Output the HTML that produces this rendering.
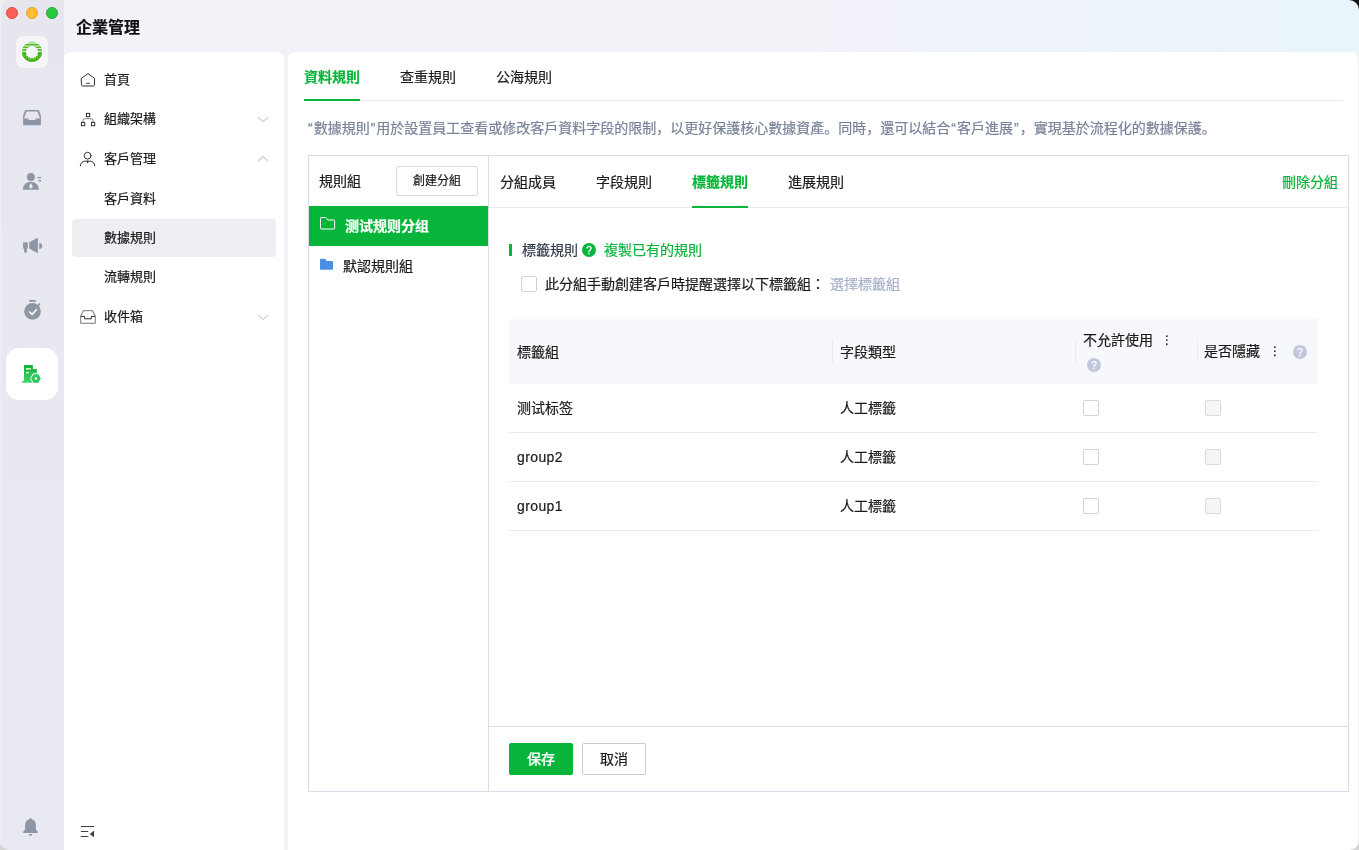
<!DOCTYPE html>
<html lang="zh-Hans">
<head>
<meta charset="utf-8">
<title>企業管理</title>
<style>
*{box-sizing:border-box;margin:0;padding:0}
html,body{width:1359px;height:850px;overflow:hidden;background:#d4d4d4}
body{font-family:"Liberation Sans","Noto Sans CJK SC","Noto Sans CJK TC",sans-serif;font-size:14px;color:#1a1a1a;position:relative}
.win{will-change:transform;position:absolute;left:0;top:0;width:1359px;height:850px;border-radius:10px;overflow:hidden;background:linear-gradient(90deg,#f2f2f9 0%,#f2f2f9 60%,#eaf4fb 97%)}
.abs{position:absolute}
.win{-webkit-text-stroke:.2px currentColor}
.t{position:absolute;white-space:nowrap;line-height:20px;height:20px}
.rail{position:absolute;left:0;top:0;width:64px;height:850px;background:linear-gradient(180deg,#e7e6ee 0,#e8e8f1 300px,#e8e9f3 100%);box-shadow:inset 1px 0 0 #eeeef4}
.dot{position:absolute;top:7px;width:12px;height:12px;border-radius:50%}
.nav{font-size:13px;position:absolute;left:64px;top:52px;width:220px;height:800px;background:#fff;border-radius:8px 8px 0 0}
.main{position:absolute;left:288px;top:52px;width:1070px;height:800px;background:#fff;border-radius:8px 8px 0 0}
.g{color:#07b53b}
.b{font-weight:700}
.ln{position:absolute;background:#e9ebf1}
.cb{position:absolute;width:16px;height:16px;border:1px solid #d2d2d2;border-radius:2px;background:#fff}
.cb.d{background:#f5f5f5;border-color:#dadada}
.q{position:absolute;width:14px;height:14px;border-radius:50%;background:#c1c8dc;color:#fff;font-size:10px;font-weight:400;-webkit-text-stroke:.3px #fff;line-height:15px;text-align:center;font-family:"Liberation Sans",sans-serif}
</style>
</head>
<body>
<div class="abs" style="right:0;top:0;width:14px;height:14px;background:#161616"></div>
<div class="abs" style="left:0;top:0;width:14px;height:14px;background:#efefef"></div>
<div class="win">
  <!-- title -->
  <div class="t b" style="left:76px;top:18px;font-size:16px;color:#111">企業管理</div>

  <!-- left rail -->
  <div class="rail">
    <div class="dot" style="left:6px;background:#fe5f57;border:0.5px solid #e2463f"></div>
    <div class="dot" style="left:26px;background:#febc2e;border:0.5px solid #e0a028"></div>
    <div class="dot" style="left:46px;background:#28c840;border:0.5px solid #1fa833"></div>
    <div class="abs" style="left:16px;top:36px;width:32px;height:32px;border-radius:8px;background:#f5f5f8"></div>
    <div class="abs" style="left:6px;top:348px;width:52px;height:52px;border-radius:13px;background:#fff"></div>
  </div>

  <!-- nav -->
  <div class="nav">
    <div class="abs" style="left:8px;top:167px;width:204px;height:38px;border-radius:4px;background:#ededf2"></div>
    <div class="t" style="left:40px;top:18px">首頁</div>
    <div class="t" style="left:40px;top:57px">組織架構</div>
    <div class="t" style="left:40px;top:97px">客戶管理</div>
    <div class="t" style="left:40px;top:137px">客戶資料</div>
    <div class="t" style="left:40px;top:176px">數據規則</div>
    <div class="t" style="left:40px;top:215px">流轉規則</div>
    <div class="t" style="left:40px;top:255px">收件箱</div>
  </div>

  <!-- main -->
  <div class="main">
    <div class="t g b" style="left:16px;top:15px">資料規則</div>
    <div class="t" style="left:112px;top:15px">查重規則</div>
    <div class="t" style="left:208px;top:15px">公海規則</div>
    <div class="ln" style="left:16px;top:48px;width:1039px;height:1px"></div>
    <div class="abs" style="left:16px;top:47px;width:56px;height:2px;background:#07b53b"></div>
    <div class="t" style="left:20px;top:66px;color:#78839a"><span style="padding:0 1px 0 0">“</span>數據規則<span style="padding:0 1px">”</span>用於設置員工查看或修改客戶資料字段的限制，以更好保護核心數據資產。同時，還可以結合<span style="padding:0 1px">“</span>客戶進展<span style="padding:0 1px">”</span>，實現基於流程化的數據保護。</div>

    <!-- panel -->
    <div class="abs" style="left:20px;top:103px;width:1041px;height:637px;border:1px solid #d9dde8">
      <div class="ln" style="left:179px;top:0;width:1px;height:635px;background:#d9dde8"></div>
      <div class="t" style="left:10px;top:15px">規則組</div>
      <div class="abs" style="left:87px;top:10px;width:82px;height:30px;border:1px solid #dcdcdc;border-radius:2px;font-size:12px;line-height:28px;text-align:center">創建分組</div>
      <div class="abs" style="left:0;top:50px;width:179px;height:40px;background:#07b53b"></div>
      <div class="t b" style="left:36px;top:60px;color:#fff">测试规则分组</div>
      <div class="t" style="left:34px;top:100px">默認規則組</div>

      <!-- right tabs -->
      <div class="t" style="left:191px;top:16px">分組成員</div>
      <div class="t" style="left:287px;top:16px">字段規則</div>
      <div class="t g b" style="left:383px;top:16px">標籤規則</div>
      <div class="t" style="left:479px;top:16px">進展規則</div>
      <div class="t g" style="right:10px;top:16px">刪除分組</div>
      <div class="ln" style="left:180px;top:51px;width:859px;height:1px"></div>
      <div class="abs" style="left:383px;top:50px;width:56px;height:2px;background:#07b53b"></div>

      <!-- section -->
      <div class="abs" style="left:200px;top:88px;width:3px;height:12px;background:#07b53b"></div>
      <div class="t" style="left:213px;top:84px;color:#30384a">標籤規則</div>
      <div class="q" style="left:273px;top:87px;background:#07b53b">?</div>
      <div class="t g" style="left:295px;top:84px">複製已有的規則</div>
      <div class="cb" style="left:212px;top:120px"></div>
      <div class="t" style="left:236px;top:118px">此分組手動創建客戶時提醒選擇以下標籤組<span lang="zh-Hant">：</span></div>
      <div class="t" style="left:521px;top:118px;color:#a6b0c8">選擇標籤組</div>

      <!-- table -->
      <div class="abs" style="left:200px;top:163px;width:809px;height:65px;background:#f7f8fc"></div>
      <div class="t" style="left:208px;top:186px">標籤組</div>
      <div class="t" style="left:531px;top:186px">字段類型</div>
      <div class="t" style="left:774px;top:174px">不允許使用</div>
      <div class="t" style="left:895px;top:185px">是否隱藏</div>
      <div class="t" style="left:852px;top:174px;font-family:'DejaVu Sans',sans-serif;font-size:12px;width:8px;text-align:center">⋮</div>
      <div class="t" style="left:960px;top:185px;font-family:'DejaVu Sans',sans-serif;font-size:12px;width:8px;text-align:center">⋮</div>
      <div class="q" style="left:778px;top:202px">?</div>
      <div class="q" style="left:984px;top:189px">?</div>
      <div class="ln" style="left:523px;top:184px;width:1px;height:23px;background:#e9ebf1"></div>
      <div class="ln" style="left:766px;top:184px;width:1px;height:23px;background:#e9ebf1"></div>
      <div class="ln" style="left:888px;top:184px;width:1px;height:23px;background:#e9ebf1"></div>

      <div class="t" style="left:208px;top:242px">测试标签</div>
      <div class="t" style="left:208px;top:291px;letter-spacing:.4px">group2</div>
      <div class="t" style="left:208px;top:340px;letter-spacing:.4px">group1</div>
      <div class="t" style="left:531px;top:242px">人工標籤</div>
      <div class="t" style="left:531px;top:291px">人工標籤</div>
      <div class="t" style="left:531px;top:340px">人工標籤</div>
      <div class="ln" style="left:200px;top:276px;width:809px;height:1px"></div>
      <div class="ln" style="left:200px;top:325px;width:809px;height:1px"></div>
      <div class="ln" style="left:200px;top:374px;width:809px;height:1px"></div>
      <div class="cb" style="left:774px;top:244px"></div>
      <div class="cb" style="left:774px;top:293px"></div>
      <div class="cb" style="left:774px;top:342px"></div>
      <div class="cb d" style="left:896px;top:244px"></div>
      <div class="cb d" style="left:896px;top:293px"></div>
      <div class="cb d" style="left:896px;top:342px"></div>

      <!-- footer -->
      <div class="ln" style="left:180px;top:570px;width:859px;height:1px;background:#d9dde8"></div>
      <div class="abs" style="left:200px;top:587px;width:64px;height:32px;border-radius:2px;background:#07b53b;color:#fff;font-weight:500;text-align:center;line-height:32px">保存</div>
      <div class="abs" style="left:273px;top:587px;width:64px;height:32px;border-radius:2px;border:1px solid #c9ccd4;text-align:center;line-height:30px">取消</div>
    </div>
  </div>

<svg class="abs" style="left:0;top:0;pointer-events:none" width="1359" height="850" viewBox="0 0 1359 850" fill="none">
  <defs>
    <linearGradient id="gb" x1="0" y1="0" x2="0" y2="1"><stop offset="0" stop-color="#0db23a"/><stop offset="1" stop-color="#45d472"/></linearGradient>
    <clipPath id="ringclip"><path fill-rule="evenodd" d="M32 41.8a10.1 10.1 0 1 0 .01 0zM32 45.9a6 6 0 1 1-.01 0z"/></clipPath>
  </defs>
  <!-- logo ring -->
  <g>
    <path fill="#4cb81e" fill-rule="evenodd" d="M32 41.8a10.1 10.1 0 1 0 .01 0zM32 45.9a6 6 0 1 1-.01 0z"/>
    <path fill="#f5f6fa" d="M37.12 54.40L38.06 56.14L36.10 55.86zM35.81 56.14L36.03 58.11L34.32 57.11zM33.95 57.26L33.41 59.16L32.20 57.60zM31.80 57.60L30.59 59.16L30.05 57.26zM29.68 57.11L27.97 58.11L28.19 56.14zM27.90 55.86L25.94 56.14L26.88 54.40z"/>
    <g stroke="#f5f6fa">
      <path stroke-width="1.2" d="M21 43.2h22"/>
      <path stroke-width="1" d="M21 46h22M21 48.700h22M21 51.400h22"/>
    </g>
  </g>
  <!-- rail: inbox -->
  <path fill="#8f96a3" fill-rule="evenodd" d="M25.6 110h12.8q.5 0 .7.5l1.8 5.2v8.9q0 .7-.7.7H23.8q-.7 0-.7-.7v-8.9l1.8-5.2q.2-.5.7-.5zM26.5 111.5l-2 5.6v1.4h4v1.5h7v-1.5h4v-1.4l-2-5.6z"/>
  <!-- rail: person -->
  <g fill="#8f96a3">
    <circle cx="30.9" cy="177" r="4"/>
    <path fill-rule="evenodd" d="M23 189.8q-.3 0-.2-.8c.6-4.3 3.8-7.2 8.100-7.200s7.500 2.900 8.100 7.200q.1.800-.2.800zM30.900 182.900c-.6 1.200-1.800 2.600-1.800 3.700a1.800 1.800 0 0 0 3.600 0c0-1.100-1.200-2.500-1.800-3.700z"/>
    <rect x="37.200" y="176.900" width="3.900" height="1.300" rx=".3"/>
    <rect x="38.200" y="180.100" width="2.900" height="1.300" rx=".3"/>
  </g>
  <!-- rail: megaphone -->
  <g fill="#8f96a3">
    <path d="M23.100 242.200h4.700v6.300h-.8v3q0 1.400-1.450 1.400t-1.450-1.400v-3h-1z"/>
    <path d="M29.200 242.200l8-4.300q.7-.3.700.5v14q0 .8-.7.500l-8-4.400z"/>
    <path d="M39.200 242.900a3 3 0 0 1 0 6z"/>
  </g>
  <!-- rail: stopwatch -->
  <g>
    <circle cx="32.500" cy="311.400" r="8.300" fill="#8f96a3"/>
    <rect x="29" y="300.100" width="7" height="1.700" rx=".3" fill="#8f96a3"/>
    <path d="M38.300 305.400l1.300-1.300" stroke="#8f96a3" stroke-width="1.600" stroke-linecap="round"/>
    <path d="M29.400 311.700l2.800 2.700 4.300-4.900" stroke="#fff" stroke-width="1.500" stroke-linecap="round" stroke-linejoin="round"/>
  </g>
  <!-- rail: building active -->
  <g>
    <path fill="url(#gb)" d="M24.600 365h7.700q.6 0 .6.600v3.400h3.400q.6 0 .6.600v13.100H22.100v-1.700h1.900v-15.400q0-.6.600-.6z"/>
    <path d="M26 368.800h4.900M26 372.600h2.800" stroke="#fff" stroke-width="1.200"/>
    <path fill="#2fc85c" stroke="#fff" stroke-width="1" d="M33.300 373.700h5.200l2.700 4.800-2.700 4.800h-5.200l-2.700-4.800z"/>
    <circle cx="35.900" cy="378.500" r="1.300" fill="#fff"/>
  </g>
  <!-- rail: bell -->
  <g fill="#8f96a3">
    <path d="M30.500 818.100q1 0 1.100 1.100c2.700.7 4.300 2.900 4.300 5.800v4.300l1.900 2.500q.4 1.200-.6 1.200H23.800q-1 0-.6-1.200l1.900-2.500v-4.300c0-2.900 1.600-5.100 4.300-5.800q.1-1.100 1.100-1.100z"/>
    <path d="M28.700 834.100h3.600q-.3 1.900-1.800 1.900t-1.800-1.900z"/>
  </g>

  <!-- nav icons -->
  <g stroke="#2d3035" stroke-width="1" stroke-linejoin="round" stroke-linecap="round">
    <!-- home -->
    <path d="M81.500 78.300l6.500-4.700 6.500 4.700v6.400q0 1.300-1.300 1.300H82.800q-1.300 0-1.300-1.300z"/>
    <path d="M86.700 83.300h2.600"/>
    <!-- org -->
    <rect x="86.4" y="113.4" width="3.3" height="3.3" stroke-linejoin="miter"/>
    <rect x="81.4" y="122.4" width="3.3" height="3.3" stroke-linejoin="miter"/>
    <rect x="91.4" y="122.4" width="3.3" height="3.3" stroke-linejoin="miter"/>
    <path d="M83.050 121.600v-1.400q0-1.500 1.500-1.500h7q1.500 0 1.500 1.500v1.400" stroke="#7d838c"/>
    <!-- person -->
    <circle cx="87.600" cy="155.700" r="3.400"/>
    <path d="M80.300 166c.3-3.200 2.400-4.800 4.600-4.800h5.400c2.200 0 4.300 1.600 4.600 4.800"/>
    <path d="M87.600 161.300v1.200" stroke-width="1.400"/>
  </g>
  <!-- nav inbox -->
  <path d="M83.400 310.700h9.100l2.800 5.500v6.200q0 1-1 1H81.600q-1 0-1-1v-6.200z" stroke="#8e9399" stroke-width="1.300" stroke-linejoin="round"/>
  <path d="M80.800 316.400h3.800v2.400h6.700v-2.400h3.800" stroke="#2d3035" stroke-width="1"/>
  <!-- chevrons -->
  <g stroke="#c9cacf" stroke-width="1.100" stroke-linecap="round" stroke-linejoin="round">
    <path d="M258.300 117.300l4.800 4.300 4.800-4.300"/>
    <path d="M258.300 160.800l4.800-4.300 4.800 4.300"/>
    <path d="M258.300 315.300l4.800 4.300 4.800-4.300"/>
  </g>
  <!-- collapse -->
  <g stroke="#3d4147" stroke-width="1.100" stroke-linecap="round">
    <path d="M81.300 826.500h12.500M81.300 831.500h6.500M81.300 836.500h6.500"/>
  </g>
  <path d="M89.800 834l3.700-3q.5-.3.500.3v5.400q0 .6-.5.300z" fill="#3d4147"/>

  <!-- folders -->
  <path d="M320.500 218.300q0-.8.800-.8h4.200q.5 0 .8.400l1.400 2.100h6.100q.8 0 .8.800v7.400q0 .8-.8.800h-12.500q-.8 0-.8-.8z" stroke="#fff" stroke-width="1" stroke-linejoin="round"/>
  <path d="M320 259.700q0-1 1-1h3.800q.6 0 .9.500l1 1.800h5.300q1 0 1 1v6.800q0 1-1 1h-11q-1 0-1-1z" fill="#4a90e2"/>
</svg>
</div>
</body>
</html>
